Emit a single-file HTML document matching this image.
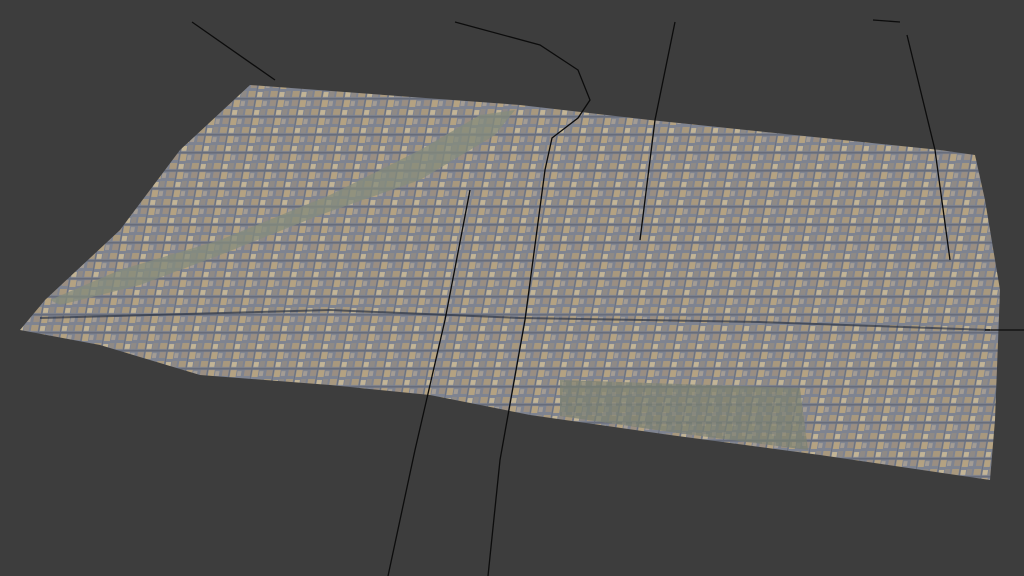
<!DOCTYPE html>
<html><head><style>
html,body{margin:0;padding:0;background:#3d3d3d;width:1024px;height:576px;overflow:hidden}
</style></head><body>
<svg width="1024" height="576" viewBox="0 0 1024 576" xmlns="http://www.w3.org/2000/svg">
<defs>
<pattern id="city" width="22" height="18" patternUnits="userSpaceOnUse" patternTransform="skewX(-10)">
<rect width="22" height="18" fill="#7e8390"/>
<rect x="1" y="1" width="7" height="6" fill="#a8987e"/>
<rect x="10" y="2" width="5" height="5" fill="#c2b496"/>
<rect x="16" y="1" width="5" height="6" fill="#8f8a86"/>
<rect x="2" y="10" width="6" height="6" fill="#9a8e82"/>
<rect x="10" y="10" width="6" height="7" fill="#b4a282"/>
<rect x="17" y="11" width="4" height="5" fill="#a39c94"/>
<rect x="0" y="8" width="22" height="1.5" fill="#646a78"/>
<rect x="8.5" y="0" width="1" height="18" fill="#6a707e"/>
</pattern>
<pattern id="park" width="10" height="10" patternUnits="userSpaceOnUse">
<rect width="10" height="10" fill="#7a8072"/>
<rect x="2" y="2" width="4" height="4" fill="#8a8a78"/>
</pattern>
</defs>
<polygon points="250,85 520,105 650,120 940,150 975,155 985,200 1000,290 995,420 990,480 820,455 670,435 530,415 430,395 330,385 200,375 100,345 20,330 45,300 120,230 180,150" fill="url(#city)"/>
<polygon points="50,300 120,270 220,240 330,195 420,150 480,115 515,110 495,135 420,180 320,215 220,255 140,285 60,305" fill="#858c7c" opacity="0.75"/>
<polygon points="560,380 800,388 808,450 670,432 560,416" fill="url(#park)" opacity="0.75"/>
<polyline points="40,318 330,310 520,318 760,322 990,330" stroke="#2e3646" stroke-width="2" fill="none" opacity="0.7"/>
<g stroke="#0c0c0c" stroke-width="1.3" fill="none">
<line x1="192" y1="22" x2="275" y2="80"/>
<polyline points="455,22 540,45 578,70 590,100 578,118 552,138 545,170 525,320 500,460 488,576"/>
<polyline points="675,22 655,120 640,240"/>
<line x1="873" y1="20" x2="900" y2="22"/>
<polyline points="907,35 935,150 950,260"/>
<polyline points="470,190 445,320 415,450 388,576"/>
<line x1="985" y1="330" x2="1024" y2="330"/>
</g>
</svg>
</body></html>
